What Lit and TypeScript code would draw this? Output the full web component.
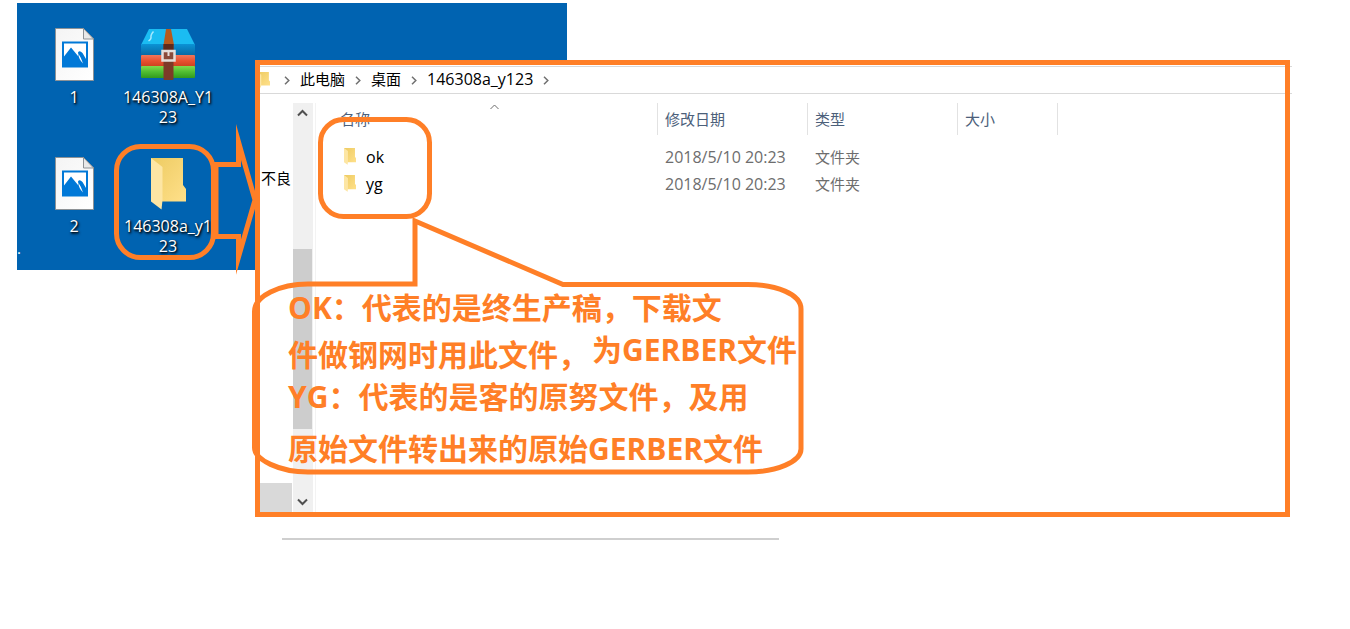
import { LitElement, html, svg, css } from "lit";
import { customElement, property } from "lit/decorators.js";

const pictureIcon = html`<svg width="39" height="53" viewBox="0 0 39 53" aria-hidden="true">
  <defs><linearGradient id="paper" x1="0" y1="0" x2="1" y2="1"><stop offset="0" stop-color="#f4f4f4" /><stop offset="1" stop-color="#fff" /></linearGradient></defs>
  <path d="M.5 .5H28.500L38.500 11V52.500H.5Z" fill="url(#paper)" stroke="#8d9296" />
  <path d="M28.500 .5V11H38.500Z" fill="#e9e9e9" stroke="#8d9296" />
  <path d="M7 13.500H33V39.500H7Z" fill="#0078d7" />
  <path d="M9 15.500H31V31L27.500 25Q24.500 22 23 24.500V28L16 19.500 9 28.500Z" fill="#fff" />
  <path d="M23 24.500Q23.500 31 28 35.500Q26.500 30 23.500 26Z" fill="#fff" />
</svg>`;

const archiveIcon = html`<svg width="56" height="53" viewBox="0 0 56 53" aria-hidden="true">
  <defs>
    <linearGradient id="blue" x1="0" y1="0" x2="0" y2="1"><stop offset="0" stop-color="#0b93d6" /><stop offset="1" stop-color="#08669f" /></linearGradient>
    <linearGradient id="red" x1="0" y1="0" x2="0" y2="1"><stop offset="0" stop-color="#f0765a" /><stop offset=".5" stop-color="#e8502f" /><stop offset="1" stop-color="#c8401f" /></linearGradient>
    <linearGradient id="green" x1="0" y1="0" x2="0" y2="1"><stop offset="0" stop-color="#83d94a" /><stop offset=".5" stop-color="#4fbd31" /><stop offset="1" stop-color="#329a1c" /></linearGradient>
  </defs>
  <path d="M9 1H47L55 17H1Z" fill="#1bbcf2" />
  <rect x="1" y="16" width="54" height="12" rx="1" fill="url(#blue)" />
  <rect x="1" y="27" width="54" height="12" rx="1" fill="url(#red)" />
  <rect x="1" y="38" width="54" height="12" rx="1" fill="url(#green)" />
  <path d="M13.500 3.500Q10.500 7 11 9T8.500 13" fill="none" stroke="#a5e8ff" stroke-width="1.500" />
  <path d="M26 1H31L34 17H23.500Z" fill="#b65a1e" />
  <rect x="23.500" y="16" width="10" height="36" rx="1" fill="#7d3a28" />
  <rect x="23.500" y="16" width="10" height="7" fill="#5f2a1c" />
  <rect x="22.500" y="23" width="12" height="9.500" fill="#8a4b3a" stroke="#e5dfdb" stroke-width="2.500" />
  <path d="M28.500 23V28" stroke="#e5dfdb" stroke-width="2" />
</svg>`;

const folderIcon = (width: number, height: number) => html`<svg width=${width} height=${height} viewBox="0 0 35 52" preserveAspectRatio="none" aria-hidden="true">
  <defs><linearGradient id="sheet" x1="0" y1="0" x2="1" y2="1"><stop offset="0" stop-color="#edcb62" /><stop offset="1" stop-color="#ffe08a" /></linearGradient></defs>
  <path d="M0 0H32V27L35 31V43.500H5Z" fill="url(#sheet)" />
  <path d="M0 0 11.500 9V42L10.500 51.500 0 43.500Z" fill="#fde6a4" />
</svg>`;

const chevron = html`<svg class="chevron" width="6" height="9" viewBox="0 0 6 9" aria-hidden="true"><path d="M1 .8 4.800 4.500 1 8.200" fill="none" stroke="#707070" stroke-width="1.500" /></svg>`;

@customElement("desktop-item")
class DesktopItem extends LitElement {
  @property() kind = "picture";
  @property({ attribute: false }) lines: string[] = [];

  static styles = css`
    :host { display: block; }
    .item { display: flex; flex-direction: column; align-items: center; gap: 6px; width: 100%; padding: 0; border: 0; background: none; color: #fff; font: inherit; cursor: default; }
    .icon { display: flex; height: 54px; align-items: flex-end; }
    .folder { display: flex; }
    .label { font-size: 16px; line-height: 20px; white-space: nowrap; text-shadow: 1px 1px 2px #000, 1px 2px 3px rgba(0, 0, 0, 0.7); }
    .line { display: block; }
  `;

  render() {
    const icon = this.kind === "archive" ? archiveIcon : this.kind === "folder" ? html`<span class="folder">${folderIcon(35, 52)}</span>` : pictureIcon;
    return html`<button class="item" type="button">
      <span class="icon">${icon}</span>
      <span class="label">${this.lines.map((l) => html`<span class="line">${l}</span>`)}</span>
    </button>`;
  }
}

@customElement("explorer-window")
class ExplorerWindow extends LitElement {
  static styles = css`
    :host { display: flex; flex-direction: column; position: relative; padding: 5px; background: #fff; color: #000; }
    .frame { position: absolute; inset: 0; border: 5px solid #ff7f27; pointer-events: none; }
    .address { display: flex; align-items: center; gap: 10px; height: 26px; margin: 1px -7px 0 0; border: solid #d9d9d9; border-width: 1px 0; overflow: hidden; }
    .crumb { color: #000; text-decoration: none; line-height: 20px; padding-bottom: 2px; }
    .latin { font-size: 16px; }
    .place { display: flex; width: 14px; }
    .place svg { margin-left: -3px; }
    .chevron { flex: none; }
    .body { display: flex; flex: 1; min-height: 409px; padding-top: 9px; }
    .nav { display: flex; flex-direction: column; justify-content: space-between; width: 33px; padding-top: 65px; box-sizing: border-box; }
    .nav-item { padding-left: 1px; line-height: 20px; white-space: nowrap; }
    .nav-block { height: 29px; margin-right: 1px; background: #d9d9d9; }
    .scroll { display: flex; flex-direction: column; width: 20px; background: #f0f0f0; }
    .arrow { display: flex; align-items: center; justify-content: center; height: 20px; padding: 0 1px 0 0; border: 0; background: none; }
    .track { display: flex; flex: 1; flex-direction: column; padding: 126px 1px 0 0; }
    .thumb { height: 180px; background: #cdcdcd; }
    .files { flex: 1; min-width: 0; margin-left: 2px; border-left: 1px solid #f3f3f3; }
    table { width: 100%; table-layout: fixed; border-collapse: separate; border-spacing: 0; }
    .c-name { width: 342px; }
    .c-mid { width: 150px; }
    .c-size { width: 100px; }
    th { height: 32px; padding: 0 0 0 7px; border-right: 1px solid #e2e2e2; box-sizing: border-box; text-align: left; font-weight: 400; color: #4c607a; }
    th.name { position: relative; padding-left: 24px; }
    th.rest { border: 0; }
    .sort { position: absolute; left: 174px; top: 1px; }
    .head { padding: 0; border: 0; background: none; color: inherit; font: inherit; line-height: 20px; }
    td { height: 27px; padding: 0 0 0 7px; line-height: 20px; color: #6d6d6d; }
    td.name { padding-left: 28px; color: #000; }
    .file { display: flex; align-items: center; gap: 10px; }
    .spacer td { height: 8px; padding: 0; line-height: 0; }
  `;

  private files = [
    { name: "ok", date: "2018/5/10 20:23", type: "文件夹" },
    { name: "yg", date: "2018/5/10 20:23", type: "文件夹" },
  ];

  render() {
    return html`
      <nav class="address" aria-label="地址">
        <span class="place">${folderIcon(13, 16)}</span>${chevron}
        <a class="crumb" href="#">此电脑</a>${chevron}
        <a class="crumb" href="#">桌面</a>${chevron}
        <a class="crumb latin" href="#">146308a_y123</a>${chevron}
      </nav>
      <div class="body">
        <div class="nav"><span class="nav-item">不良</span><div class="nav-block"></div></div>
        <div class="scroll">
          <button class="arrow" type="button" aria-label="向上"><svg width="11" height="8" viewBox="0 0 11 8"><path d="M1 6.500 5.500 2 10 6.500" fill="none" stroke="#505050" stroke-width="2" /></svg></button>
          <div class="track"><div class="thumb"></div></div>
          <button class="arrow" type="button" aria-label="向下"><svg width="11" height="8" viewBox="0 0 11 8"><path d="M1 1.500 5.500 6 10 1.500" fill="none" stroke="#505050" stroke-width="2" /></svg></button>
        </div>
        <div class="files">
          <table>
            <colgroup><col class="c-name" /><col class="c-mid" /><col class="c-mid" /><col class="c-size" /><col /></colgroup>
            <thead><tr>
              <th class="name"><button class="head" type="button">名称</button><svg class="sort" width="9" height="6" viewBox="0 0 9 6" aria-hidden="true"><path d="M.5 5 4.500 1 8.500 5" fill="none" stroke="#6d6d6d" /></svg></th>
              <th><button class="head" type="button">修改日期</button></th>
              <th><button class="head" type="button">类型</button></th>
              <th><button class="head" type="button">大小</button></th>
              <th class="rest"></th>
            </tr></thead>
            <tbody>
              <tr class="spacer"><td colspan="5"></td></tr>
              ${this.files.map((f) => html`<tr>
                <td class="name"><span class="file">${folderIcon(12, 17)}<span class="latin">${f.name}</span></span></td>
                <td class="latin">${f.date}</td><td>${f.type}</td><td></td><td></td>
              </tr>`)}
            </tbody>
          </table>
        </div>
      </div>
      <div class="frame"></div>
    `;
  }
}

@customElement("app-root")
class AppRoot extends LitElement {
  static styles = css`
    :host { display: block; background: #fff; font: 15px/20px "Open Sans", "Noto Sans CJK SC", sans-serif; }
    .stage { position: relative; display: grid; grid-template-columns: minmax(0, 1fr); align-items: start; overflow: hidden; }
    .desktop, .window { grid-area: 1 / 1; }
    .desktop { display: grid; grid-template-columns: 94px 94px; grid-auto-rows: 129px; align-content: start; width: 550px; height: 267px; margin: 3px 0 0 17px; padding: 24px 0 0 10px; box-sizing: border-box; background: #0063b1; position: relative; }
    .dot { position: absolute; left: 0; bottom: 12px; color: #fff; line-height: 20px; }
    .window { margin: 60px 60px 0 255px; }
    .rule { width: 497px; height: 2px; margin: 21px 0 0 282px; border: 0; background: #cfcfcf; }
    .marks { position: absolute; left: 0; top: 0; pointer-events: none; }
    .note { position: absolute; left: 288px; top: 290px; margin: 0; color: #ff7f27; font-size: 30px; line-height: 36px; font-weight: 700; white-space: nowrap; }
    .note p { margin: 0; }
    .note .second { display: flex; align-items: flex-start; margin-top: 11px; }
    .note .third { margin-top: 6px; }
    .note .fourth { margin-top: 16px; }
    .raised { margin: -5px 0 0 4px; }
  `;

  render() {
    return html`
      <main class="stage" lang="zh-CN">
        <section class="desktop" aria-label="桌面">
          <desktop-item kind="picture" .lines=${["1"]}></desktop-item>
          <desktop-item kind="archive" .lines=${["146308A_Y1", "23"]}></desktop-item>
          <desktop-item kind="picture" .lines=${["2"]}></desktop-item>
          <desktop-item kind="folder" .lines=${["146308a_y1", "23"]}></desktop-item>
          <span class="dot">.</span>
        </section>
        <svg class="marks" width="300" height="300" viewBox="0 0 300 300" aria-hidden="true">
          ${svg`<g fill="none" stroke="#ff7f27" stroke-width="5">
            <rect x="116.500" y="146.500" width="97" height="111" rx="24" />
            <path d="M216 164.500H238.500V142L255 200 238.500 257V236.500H216Z" stroke-miterlimit="12" />
          </g>`}
        </svg>
        <explorer-window class="window"></explorer-window>
        <svg class="marks" width="820" height="500" viewBox="0 0 820 500" aria-hidden="true">
          ${svg`<g fill="none" stroke="#ff7f27" stroke-width="5">
            <rect x="320.500" y="119.500" width="109" height="97" rx="23" />
            <path d="M415 221V284H308C280 284 254 296 254.500 312V447C254 460 280 472 308 472H748C776 472 801 462 801 449V309C801 294 776 284.500 748 284.500H563Z" />
          </g>`}
        </svg>
        <div class="note">
          <p>OK：代表的是终生产稿，下载文</p>
          <p class="second"><span>件做钢网时用此文件，</span><span class="raised">为GERBER文件</span></p>
          <p class="third">YG：代表的是客的原努文件，及用</p>
          <p class="fourth">原始文件转出来的原始GERBER文件</p>
        </div>
      </main>
      <hr class="rule" />
    `;
  }
}
